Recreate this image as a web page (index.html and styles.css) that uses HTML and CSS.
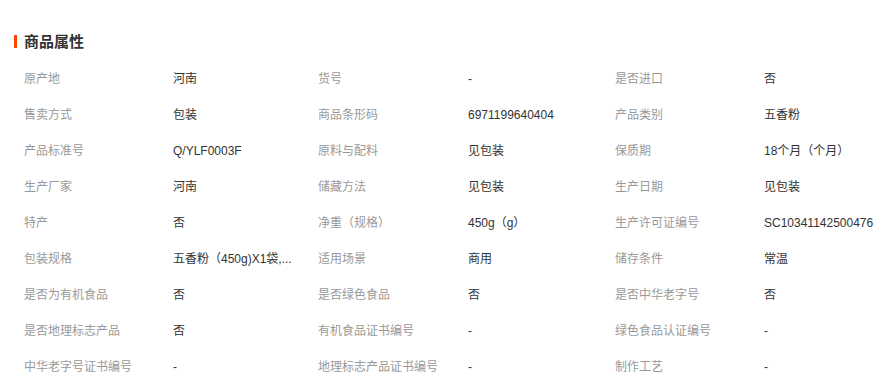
FILE: index.html
```html
<!DOCTYPE html>
<html lang="zh-CN">
<head>
<meta charset="utf-8">
<title>商品属性</title>
<link rel="stylesheet" href="styles.css">
</head>
<body>
<div class="attrs">
  <h3 class="title"><span class="bar"></span>商品属性</h3>
  <ul class="grid">
    <li class="k">原产地</li><li class="v">河南</li>
    <li class="k">货号</li><li class="v">-</li>
    <li class="k">是否进口</li><li class="v">否</li>

    <li class="k">售卖方式</li><li class="v">包装</li>
    <li class="k">商品条形码</li><li class="v">6971199640404</li>
    <li class="k">产品类别</li><li class="v">五香粉</li>

    <li class="k">产品标准号</li><li class="v">Q/YLF0003F</li>
    <li class="k">原料与配料</li><li class="v">见包装</li>
    <li class="k">保质期</li><li class="v">18个月（个月）</li>

    <li class="k">生产厂家</li><li class="v">河南</li>
    <li class="k">储藏方法</li><li class="v">见包装</li>
    <li class="k">生产日期</li><li class="v">见包装</li>

    <li class="k">特产</li><li class="v">否</li>
    <li class="k">净重（规格）</li><li class="v">450g（g）</li>
    <li class="k">生产许可证编号</li><li class="v">SC10341142500476</li>

    <li class="k">包装规格</li><li class="v">五香粉（450g)X1袋,...</li>
    <li class="k">适用场景</li><li class="v">商用</li>
    <li class="k">储存条件</li><li class="v">常温</li>

    <li class="k">是否为有机食品</li><li class="v">否</li>
    <li class="k">是否绿色食品</li><li class="v">否</li>
    <li class="k">是否中华老字号</li><li class="v">否</li>

    <li class="k">是否地理标志产品</li><li class="v">否</li>
    <li class="k">有机食品证书编号</li><li class="v">-</li>
    <li class="k">绿色食品认证编号</li><li class="v">-</li>

    <li class="k">中华老字号证书编号</li><li class="v">-</li>
    <li class="k">地理标志产品证书编号</li><li class="v">-</li>
    <li class="k">制作工艺</li><li class="v">-</li>
  </ul>
</div>
</body>
</html>
```

FILE: styles.css
```css
html, body {
  margin: 0;
  padding: 0;
  background: #fff;
}
body {
  font-family: "Liberation Sans", "Noto Sans CJK SC", sans-serif;
  font-size: 12px;
  color: #333;
}
.attrs {
  padding: 35px 0 0 14px;
}
.title {
  margin: 0;
  display: flex;
  align-items: center;
  height: 13px;
  font-size: 15px;
  line-height: 13px;
  font-weight: bold;
  color: #333;
}
.bar {
  width: 3px;
  height: 13px;
  background: #ff4400;
  margin-right: 7px;
}
.grid {
  list-style: none;
  margin: 13px 0 0 10px;
  padding: 0;
  display: grid;
  grid-template-columns: 149px 145px 150px 147px 149px auto;
  grid-auto-rows: 36px;
}
.grid li {
  line-height: 36px;
  white-space: nowrap;
}
.k {
  color: #999;
}
.v {
  color: #333;
}
```
